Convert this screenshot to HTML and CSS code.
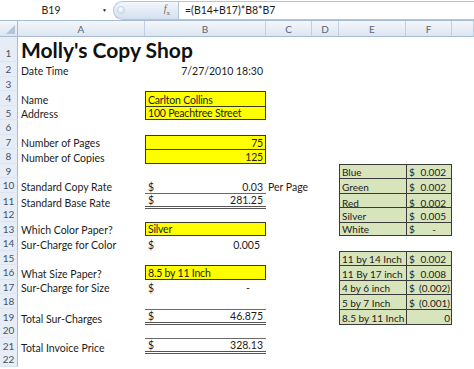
FILE: index.html
```html
<!DOCTYPE html>
<html lang="en">
<head>
    <meta charset="UTF-8">
    <title>Molly's Copy Shop</title>
    <link rel="stylesheet" href="styles.css">
</head>
<body>
    <!-- formula bar -->
    <div class="fbar">
        <div class="namebox">B19</div>
        <div class="drop">&#9660;</div>
        <div class="pill"><span class="dot"></span><span class="fx"><i>f</i><sub>x</sub></span></div>
        <div class="formula">=(B14+B17)*B8*B7</div>
    </div>

    <!-- sheet -->
    <div class="sheet">
        <div class="row head">
            <div class="corner"><svg width="9" height="9" viewBox="0 0 9 9"><polygon points="9,0 9,9 0,9" fill="#b4c4d8"/></svg></div>
            <div>A</div><div>B</div><div>C</div><div>D</div><div>E</div><div>F</div><div></div>
        </div>
        <div class="row r1">
            <div class="rh">1</div><div class="title">Molly's Copy Shop</div>
        </div>
        <div class="row">
            <div class="rh">2</div><div>Date Time</div><div class="num">7/27/2010 18:30</div>
        </div>
        <div class="row"><div class="rh">3</div></div>
        <div class="row">
            <div class="rh">4</div><div>Name</div><div class="yel">Carlton Collins</div>
        </div>
        <div class="row">
            <div class="rh">5</div><div>Address</div><div class="yel end">100 Peachtree Street</div>
        </div>
        <div class="row"><div class="rh">6</div></div>
        <div class="row">
            <div class="rh">7</div><div>Number of Pages</div><div class="yel num">75</div>
        </div>
        <div class="row">
            <div class="rh">8</div><div>Number of Copies</div><div class="yel end num">125</div>
        </div>
        <div class="row">
            <div class="rh">9</div><div></div><div></div><div></div><div></div>
            <div class="tb">Blue</div><div class="tb f acct pos"><span>$</span><span>0.002</span></div>
        </div>
        <div class="row">
            <div class="rh">10</div><div>Standard Copy Rate</div><div class="acct"><span>$</span><span>0.03</span></div>
            <div class="per">Per Page</div><div></div>
            <div class="tb">Green</div><div class="tb f acct pos"><span>$</span><span>0.002</span></div>
        </div>
        <div class="row">
            <div class="rh">11</div><div>Standard Base Rate</div><div class="acct total"><span>$</span><span>281.25</span></div>
            <div></div><div></div>
            <div class="tb">Red</div><div class="tb f acct pos"><span>$</span><span>0.002</span></div>
        </div>
        <div class="row">
            <div class="rh">12</div><div></div><div></div><div></div><div></div>
            <div class="tb">Silver</div><div class="tb f acct pos"><span>$</span><span>0.005</span></div>
        </div>
        <div class="row">
            <div class="rh">13</div><div>Which Color Paper?</div><div class="yel end">Silver</div>
            <div></div><div></div>
            <div class="tb end">White</div><div class="tb f end acct dash"><span>$</span><span>-</span></div>
        </div>
        <div class="row">
            <div class="rh">14</div><div>Sur-Charge for Color</div><div class="acct thin"><span>$</span><span>0.005</span></div>
        </div>
        <div class="row">
            <div class="rh">15</div><div></div><div></div><div></div><div></div>
            <div class="tb">11 by 14 Inch</div><div class="tb f acct pos"><span>$</span><span>0.002</span></div>
        </div>
        <div class="row">
            <div class="rh">16</div><div>What Size Paper?</div><div class="yel end">8.5 by 11 Inch</div>
            <div></div><div></div>
            <div class="tb">11 By 17 inch</div><div class="tb f acct pos"><span>$</span><span>0.008</span></div>
        </div>
        <div class="row">
            <div class="rh">17</div><div>Sur-Charge for Size</div><div class="acct dash"><span>$</span><span>-</span></div>
            <div></div><div></div>
            <div class="tb">4 by 6 inch</div><div class="tb f acct neg"><span>$</span><span>(0.002)</span></div>
        </div>
        <div class="row">
            <div class="rh">18</div><div></div><div></div><div></div><div></div>
            <div class="tb">5 by 7 Inch</div><div class="tb f acct neg"><span>$</span><span>(0.001)</span></div>
        </div>
        <div class="row">
            <div class="rh">19</div><div>Total Sur-Charges</div><div class="acct total"><span>$</span><span>46.875</span></div>
            <div></div><div></div>
            <div class="tb end">8.5 by 11 Inch</div><div class="tb f end num neg">0</div>
        </div>
        <div class="row"><div class="rh">20</div></div>
        <div class="row">
            <div class="rh">21</div><div>Total Invoice Price</div><div class="acct total"><span>$</span><span>328.13</span></div>
        </div>
        <div class="row"><div class="rh">22</div></div>
    </div>
</body>
</html>
```

FILE: styles.css
```css
* { box-sizing: border-box; margin: 0; padding: 0; }
body {
    font-family: Lato, "Liberation Sans", sans-serif;
    font-size: 10.5px;
    color: #1c1c1c;
    background: #fff;
    width: 474px;
    height: 369px;
    overflow: hidden;
}

/* formula bar */
.fbar {
    display: flex;
    align-items: center;
    height: 21px;
    border-bottom: 1px solid #a7bbd3;
}
.namebox { width: 102px; text-align: center; color: #222; }
.drop { width: 11px; font-size: 5px; color: #222; }
.pill {
    width: 65px;
    height: 19px;
    display: flex;
    align-items: center;
    justify-content: space-between;
    padding: 0 8px 0 3px;
    border: 1px solid #b3c5dc;
    border-right: none;
    border-radius: 10px 0 0 10px;
    background: linear-gradient(#f3f7fc, #d3e0f0);
}
.dot {
    width: 8px;
    height: 8px;
    border-radius: 50%;
    background: radial-gradient(circle at 40% 35%, #fff, #c7d6ea);
    border: 1px solid #c2d2e6;
}
.fx { font-family: "Liberation Serif", serif; color: #6b6b6b; font-size: 10px; }
.fx sub { font-size: 7px; }
.formula {
    flex: 1;
    height: 19px;
    line-height: 17px;
    padding-left: 6px;
    border: 1px solid #b3c5dc;
    border-right: none;
}

/* grid */
.row {
    display: grid;
    grid-template-columns: 18px 127px 121px 46px 27px 67px 46px 22px;
    height: 14.5px;
}
.row > div {
    display: flex;
    align-items: flex-end;
    padding: 0 3px 0;
    white-space: nowrap;
}
.rh {
    justify-content: center;
    align-items: center !important;
    padding: 1px 0 0 !important;
    background: #e6edf7;
    border-right: 1px solid #a7bbd3;
    border-bottom: 1px solid #dbe4ef;
    color: #4a5260;
    font-size: 10px;
}

.head { height: 16px; }
.head > div {
    justify-content: center;
    align-items: center !important;
    background: linear-gradient(#f4f7fb, #dce5f1);
    border-right: 1px solid #c0cfe1;
    border-bottom: 1px solid #a7bbd3;
    color: #5a6475;
    font-size: 10px;
}
.head .corner {
    justify-content: flex-end;
    align-items: flex-end !important;
    padding: 0 2px 2px !important;
    border-right: 1px solid #a7bbd3;
}

.r1 { height: 25px; }
.r1 .rh { padding-top: 7px !important; }
.title {
    font-size: 21px;
    font-weight: 700;
    color: #111;
    padding-bottom: 0 !important;
}

.num { justify-content: flex-end; }
.acct { justify-content: space-between; padding-right: 3px !important; }
.acct.thin { padding-right: 6px !important; }
.acct.dash { padding-right: 16px !important; }
.per { padding-left: 2px !important; }

.yel {
    background: #ffff00;
    border: 1px solid #3a3a2a;
    border-bottom: none;
    padding: 0 2px !important;
    letter-spacing: -0.2px;
}
.yel.end { border-bottom: 1px solid #3a3a2a; }

.total {
    border-top: 1px solid #6a6a6a;
    border-bottom: 3px double #555;
}

.tb {
    background: #d7e4bc;
    border-top: 1px solid #3a3a3a;
    border-left: 1px solid #3a3a3a;
    padding: 0 2px !important;
    font-size: 10px;
}
.tb.f { border-right: 1px solid #3a3a3a; }
.tb.end { border-bottom: 1px solid #3a3a3a; }
.tb.pos { padding-right: 5px !important; }
.tb.neg { padding-right: 1px !important; }
.tb.dash { padding-right: 15px !important; }
```
